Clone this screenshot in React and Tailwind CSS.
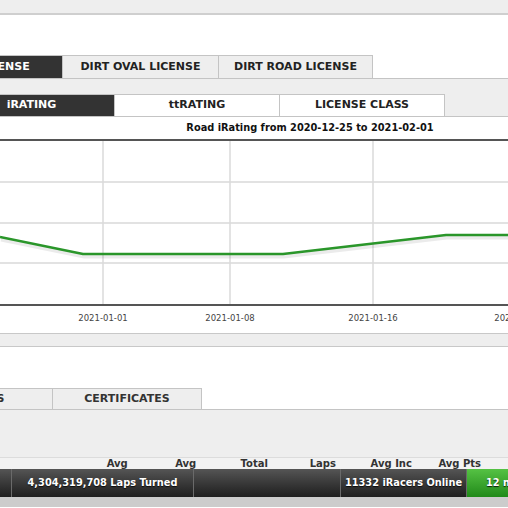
import React from "react";

const font = { fontFamily: '"DejaVu Sans", Verdana, sans-serif' };

function Tab({ label, dark, className = "" }) {
  return (
    <div
      className={
        "shrink-0 flex items-center justify-center font-bold text-[11px] border-t border-l border-[#c4c4c4] whitespace-nowrap " +
        (dark ? "bg-[#333333] text-white " : "") +
        className
      }
    >
      {label}
    </div>
  );
}

function Chart() {
  return (
    <svg width="508" height="163" viewBox="0 0 508 163" className="block">
      <g stroke="#e2e2e2" strokeWidth="2">
        <line x1="0" y1="41" x2="508" y2="41" />
        <line x1="0" y1="82" x2="508" y2="82" />
        <line x1="0" y1="122" x2="508" y2="122" />
      </g>
      <g stroke="#dadada" strokeWidth="1.5">
        <line x1="103" y1="0" x2="103" y2="163" />
        <line x1="230" y1="0" x2="230" y2="163" />
        <line x1="373" y1="0" x2="373" y2="163" />
      </g>
      <polyline
        points="0,97 83,114 283,114 446,95 508,95"
        fill="none"
        stroke="#000"
        strokeOpacity="0.08"
        strokeWidth="4"
        transform="translate(1,1.5)"
      />
      <polyline
        points="0,96 83,113 283,113 446,94 508,94"
        fill="none"
        stroke="#2a962a"
        strokeWidth="2.5"
        strokeLinejoin="round"
      />
    </svg>
  );
}

function BarSeg({ children, className = "" }) {
  return (
    <div
      className={
        "shrink-0 h-full flex items-center justify-center text-white font-bold text-[9.8px] border-l border-[#6a6a6a] whitespace-nowrap [text-shadow:0_1px_1px_rgba(0,0,0,0.8)] " +
        className
      }
    >
      {children}
    </div>
  );
}

export default function App() {
  return (
    <div className="w-[508px] h-[508px] overflow-hidden bg-white text-[#222]" style={font}>
      {/* top strip */}
      <div className="h-[15px] bg-[#eeeeee] border-b-2 border-[#cfcfcf]" />
      <div className="h-[40px]" />

      {/* license tabs */}
      <div className="flex h-[23px]">
        <Tab label="ROAD LICENSE" dark className="ml-[-94px] w-[156px] border-[#333]" />
        <Tab label="DIRT OVAL LICENSE" className="w-[156px] bg-[#eeeeee]" />
        <Tab label="DIRT ROAD LICENSE" className="w-[155px] bg-[#eeeeee] border-r" />
      </div>

      {/* sub tabs band */}
      <div className="border-t border-[#c4c4c4] bg-[#eeeeee] pt-[15px]">
        <div className="flex h-[22px]">
          <Tab label="iRATING" dark className="ml-[-52px] w-[166px] border-[#333]" />
          <Tab label="ttRATING" className="w-[165px] bg-white" />
          <Tab label="LICENSE CLASS" className="w-[166px] bg-white border-r" />
        </div>
      </div>

      {/* title */}
      <div className="h-[23px] border-t border-[#c4c4c4] flex items-center justify-center pl-[112px] font-bold text-[9.8px] text-[#111]">
        Road iRating from 2020-12-25 to 2021-02-01
      </div>

      {/* chart */}
      <div className="border-t-2 border-b-2 border-[#555555]">
        <Chart />
      </div>
      <div className="relative h-[27px] text-[8.5px] text-[#444] whitespace-nowrap">
        <span className="absolute top-[6px] left-[103px] -translate-x-1/2">2021-01-01</span>
        <span className="absolute top-[6px] left-[230px] -translate-x-1/2">2021-01-08</span>
        <span className="absolute top-[6px] left-[373px] -translate-x-1/2">2021-01-16</span>
        <span className="absolute top-[6px] left-[519px] -translate-x-1/2">2021-01-24</span>
      </div>

      {/* gray band */}
      <div className="h-[14px] bg-[#eeeeee] border-y border-[#c8c8c8]" />
      <div className="h-[41px]" />

      {/* lower tabs */}
      <div className="flex h-[21px]">
        <Tab label="AWARDS" className="ml-[-98px] w-[150px] bg-[#eeeeee] text-[#333]" />
        <Tab label="CERTIFICATES" className="w-[150px] bg-[#eeeeee] text-[#333] border-r" />
      </div>
      <div className="h-[48px] bg-[#eeeeee] border-t border-[#c4c4c4]" />

      {/* header row */}
      <div className="h-[12px] bg-[#f2f2f2] border-t border-[#dcdcdc] flex items-end text-[10px] font-bold text-[#333] leading-none">
        <div className="ml-[83px] flex">
          <span className="w-[68.5px] text-center">Avg</span>
          <span className="w-[68.5px] text-center">Avg</span>
          <span className="w-[68.5px] text-center">Total</span>
          <span className="w-[68.5px] text-center">Laps</span>
          <span className="w-[68.5px] text-center">Avg Inc</span>
          <span className="w-[68.5px] text-center">Avg Pts</span>
        </div>
      </div>

      {/* status bar */}
      <div className="h-[28px] flex overflow-hidden bg-gradient-to-b from-[#555555] to-[#1f1f1f]">
        <div className="w-[11px] h-full shrink-0" />
        <BarSeg className="w-[182px]">4,304,319,708 Laps Turned</BarSeg>
        <BarSeg className="w-[147px]" />
        <BarSeg className="w-[126px]">11332 iRacers Online</BarSeg>
        <BarSeg className="w-[60px] justify-start pl-[19px] bg-gradient-to-b from-[#55c244] to-[#1f8a18]">
          <span>12 members</span>
        </BarSeg>
      </div>
      <div className="h-[10px] bg-[#cccccc]" />
    </div>
  );
}
